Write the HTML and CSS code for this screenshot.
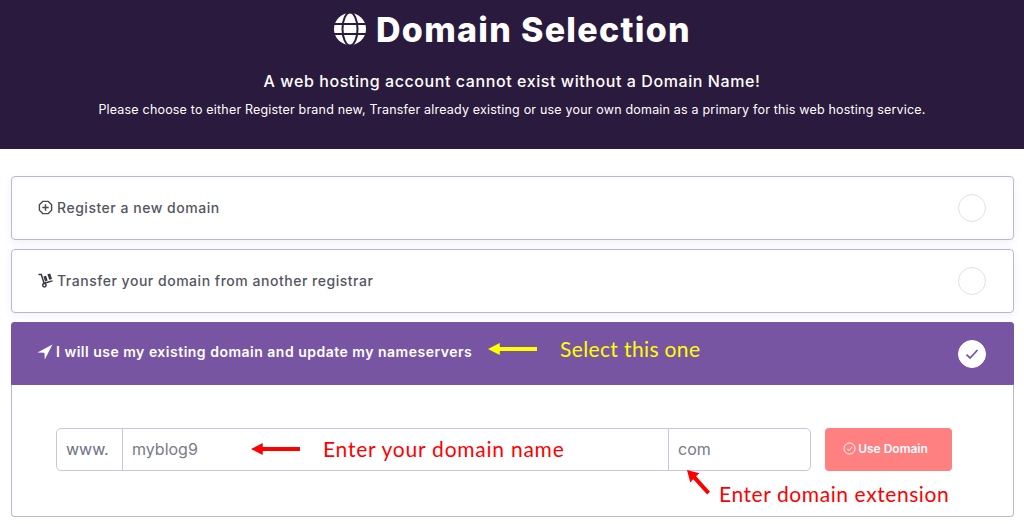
FILE: index.html
```html
<!DOCTYPE html>
<html lang="en">
<head>
  <meta charset="UTF-8" />
  <meta name="viewport" content="width=device-width, initial-scale=1.0" />
  <title>Domain Selection</title>
  <link rel="stylesheet" href="styles.css">
</head>
<body>

  <header class="hero">
    <h1>
      <svg class="globe" viewBox="0 0 34 34" fill="none" stroke-width="2">
        <circle cx="17" cy="17" r="16" fill="#fff" />
        <ellipse cx="17" cy="17" rx="7.500" ry="16.500" stroke="#2a1a3d" />
        <path d="M1 12h32M1 22h32" stroke="#2a1a3d" />
      </svg>
      Domain Selection
    </h1>
    <h2>A web hosting account cannot exist without a Domain Name!</h2>
    <p>Please choose to either Register brand new, Transfer already existing or use your own domain as a primary for this web hosting service.</p>
  </header>

  <main class="options">
    <div class="option">
      <span class="option-label">
        <svg class="icon" viewBox="0 0 16 16" fill="none" stroke="#4a4a55" stroke-width="1.5">
          <path d="M5 1.500h6L14.500 5v6L11 14.500H5L1.500 11V5z" stroke-linejoin="round" />
          <path d="M8 4.600v6.800M4.600 8h6.800" />
        </svg>
        Register a new domain
      </span>
      <span class="radio"></span>
    </div>

    <div class="option">
      <span class="option-label">
        <svg class="icon" viewBox="0 0 16 16" fill="none" stroke="#3a3a45" stroke-width="1.6">
          <path d="M.5 1.500h3l3 9.500 9-2.600" />
          <circle cx="6.800" cy="13" r="1.800" />
          <path d="M5.800 3.800l2.800-.9 1.700 5.200-2.800.9zM10 1.300l3-.9 2 6-3 .9z" fill="#3a3a45" stroke="none" />
        </svg>
        Transfer your domain from another registrar
      </span>
      <span class="radio"></span>
    </div>

    <div class="option option-active">
      <span class="option-label">
        <svg class="icon icon-plane" viewBox="0 0 16 16" fill="#fff">
          <path d="M15.500.5L.5 8.400l6.900.3.400 6.800z" />
        </svg>
        I will use my existing domain and update my nameservers
      </span>
      <span class="radio radio-on">
        <svg viewBox="0 0 16 16" fill="none" stroke="#7855a3" stroke-width="1.800">
          <path d="M2.500 8.600l3.600 3.400 7.400-8" />
        </svg>
      </span>
    </div>

    <div class="panel">
      <div class="domain-group">
        <span class="prefix">www.</span>
        <span class="field field-name">myblog9</span>
        <span class="field field-ext">com</span>
      </div>
      <button class="use-btn">
        <svg viewBox="0 0 16 16" fill="none" stroke="#fff" stroke-width="1.200">
          <circle cx="8" cy="8" r="6.800" />
          <path d="M5 8.300l2.200 2.200L11.200 6" />
        </svg>
        Use Domain
      </button>
    </div>
  </main>

  <!-- notes drawn over the screenshot -->
  <svg class="arrow arrow-select" viewBox="0 0 50 12">
    <path d="M0 6l12-6v4h38v4H12v4z" fill="#ffff00" />
  </svg>
  <span class="note note-select">Select this one</span>

  <svg class="arrow arrow-name" viewBox="0 0 50 12">
    <path d="M0 6l12-6v4h38v4H12v4z" fill="#ff0000" />
  </svg>
  <span class="note note-name">Enter your domain name</span>

  <svg class="arrow arrow-ext" viewBox="0 0 26 28">
    <path d="M1 1l13 3.500-3.500 3L25 23.500 22 26.500 7.500 10.500 4.500 14z" fill="#ff0000" />
  </svg>
  <span class="note note-ext">Enter domain extension</span>

</body>
</html>
```

FILE: styles.css
```css
body {
  margin: 0;
  height: 524px;
  overflow: hidden;
  position: relative;
  background-color: #fff;
  font-family: 'Inter', 'Open Sans', sans-serif;
  color: #55555f;
}

.hero {
  height: 149px;
  box-sizing: border-box;
  padding-top: 8px;
  background-color: #2a1a3d;
  color: #fff;
  text-align: center;
}
.hero h1 {
  display: flex;
  justify-content: center;
  align-items: center;
  gap: 9px;
  margin: 0;
  height: 42px;
  font-size: 34px;
  font-weight: 800;
  letter-spacing: 1.3px;
}
.globe {
  width: 34px;
  height: 34px;
}
.hero h2 {
  margin: 20px 0 0;
  font-size: 16px;
  line-height: 22px;
  font-weight: 500;
  letter-spacing: 0.58px;
}
.hero p {
  margin: 9px 0 0;
  font-size: 12.500px;
  line-height: 18px;
  letter-spacing: 0.19px;
}

.options {
  display: flex;
  flex-direction: column;
  margin: 27px 10px 0 11px;
}

.option {
  display: flex;
  justify-content: space-between;
  align-items: center;
  height: 64px;
  box-sizing: border-box;
  margin-bottom: 9px;
  padding: 0 27px 0 26px;
  background-color: #fff;
  border: 1px solid #bfb2dc;
  border-radius: 4px;
  box-shadow: 0 3px 8px rgba(90, 70, 140, 0.08);
}
.option-label {
  display: flex;
  align-items: center;
  gap: 4px;
  padding-bottom: 2px;
  font-size: 14px;
  letter-spacing: 0.52px;
  font-weight: 500;
}
.icon {
  width: 15px;
  height: 15px;
}
.icon-plane {
  width: 16px;
  height: 16px;
}

.option-active {
  height: 63px;
  margin-bottom: 0;
  padding-left: 25px;
  background-color: #7855a3;
  border-color: #7855a3;
  border-radius: 3px 3px 0 0;
  color: #fff;
  box-shadow: none;
}
.option-active .option-label {
  gap: 3px;
  padding-bottom: 4px;
  font-weight: 600;
  letter-spacing: 0.5px;
}

.radio {
  width: 28px;
  height: 28px;
  box-sizing: border-box;
  border: 1px solid #e2e0e6;
  border-radius: 50%;
  display: flex;
  align-items: center;
  justify-content: center;
}
.radio-on {
  background-color: #fff;
  border-color: #fff;
}
.radio-on svg {
  width: 16px;
  height: 16px;
}

.panel {
  display: flex;
  align-items: flex-start;
  gap: 14px;
  height: 132px;
  box-sizing: border-box;
  padding: 43px 0 0 44px;
  border: 1px solid #bfb2dc;
  border-top: none;
  border-radius: 0 0 4px 4px;
}

.domain-group {
  display: flex;
  width: 755px;
  height: 43px;
  box-sizing: border-box;
  border: 1px solid #c9c3ea;
  border-radius: 5px;
  font-size: 16px;
  line-height: 41px;
  color: #7a7a88;
}
.prefix {
  width: 66px;
  box-sizing: border-box;
  padding-left: 9px;
  border-right: 1px solid #c9c3ea;
  color: #6c6f85;
}
.field {
  box-sizing: border-box;
  padding-left: 9px;
}
.field-name {
  flex: 1;
  border-right: 1px solid #c9c3ea;
}
.field-ext {
  width: 141px;
}

.use-btn {
  display: flex;
  align-items: center;
  justify-content: center;
  gap: 2px;
  width: 127px;
  height: 43px;
  padding: 0 6px 2px 0;
  border: none;
  border-radius: 4px;
  background-color: #ff8080;
  color: #fff;
  font-family: inherit;
  font-size: 12px;
  font-weight: 600;
}
.use-btn svg {
  width: 13px;
  height: 13px;
}

.note {
  position: absolute;
  font-family: 'Lato', sans-serif;
  font-size: 21px;
  line-height: 26px;
  white-space: nowrap;
}
.note-select {
  left: 560px;
  top: 336px;
  color: #ffff00;
  letter-spacing: 0.37px;
}
.note-name {
  left: 323px;
  top: 436px;
  color: #ff0000;
  letter-spacing: 0.76px;
}
.note-ext {
  left: 719px;
  top: 481px;
  color: #ff0000;
  letter-spacing: 0.58px;
}

.arrow {
  position: absolute;
}
.arrow-select {
  left: 488px;
  top: 343px;
  width: 49px;
  height: 12px;
}
.arrow-name {
  left: 251px;
  top: 443px;
  width: 49px;
  height: 12px;
}
.arrow-ext {
  left: 686px;
  top: 469px;
  width: 25px;
  height: 27px;
}
```
